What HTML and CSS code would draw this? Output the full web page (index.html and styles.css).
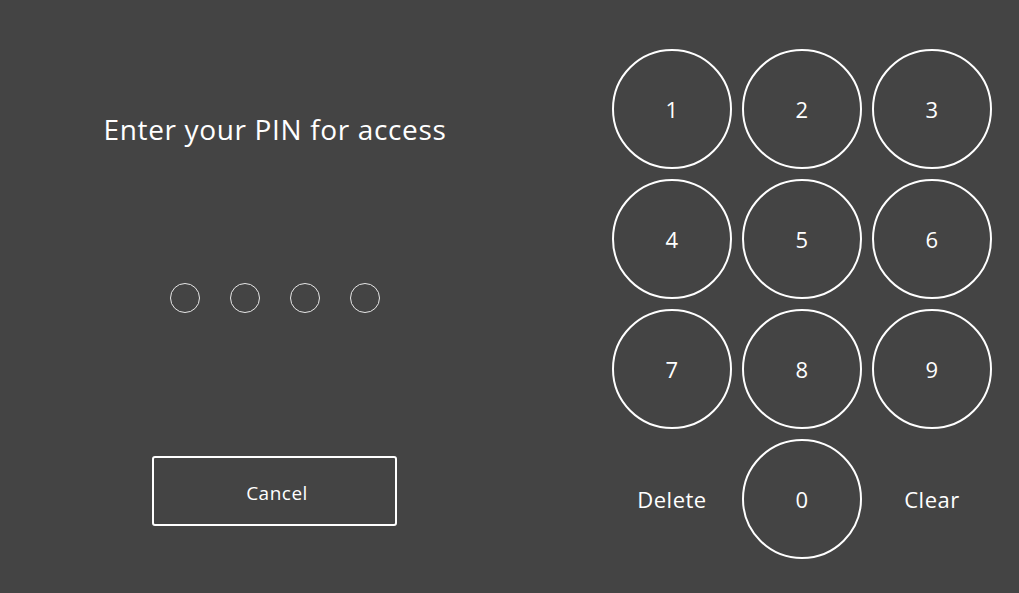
FILE: index.html
```html
<!DOCTYPE html>
<html>
<head>
<meta charset="utf-8">
<link rel="stylesheet" href="styles.css">
</head>
<body>
<div class="screen">
  <section class="left">
    <h1 class="title">Enter your PIN for access</h1>
    <div class="dots">
      <span class="dot"></span>
      <span class="dot"></span>
      <span class="dot"></span>
      <span class="dot"></span>
    </div>
    <button class="cancel">Cancel</button>
  </section>
  <section class="keypad">
    <button class="key">1</button>
    <button class="key">2</button>
    <button class="key">3</button>
    <button class="key">4</button>
    <button class="key">5</button>
    <button class="key">6</button>
    <button class="key">7</button>
    <button class="key">8</button>
    <button class="key">9</button>
    <button class="key text">Delete</button>
    <button class="key">0</button>
    <button class="key text">Clear</button>
  </section>
</div>
</body>
</html>
```
FILE: styles.css
```css
html, body {
  margin: 0;
  padding: 0;
  background: #444444;
  width: 1019px;
  height: 593px;
  overflow: hidden;
  font-family: "Open Sans", "Lato", sans-serif;
  color: #ffffff;
}
.screen {
  display: flex;
  height: 593px;
}
.left {
  width: 550px;
  display: flex;
  flex-direction: column;
  align-items: center;
}
.title {
  margin: 110px 0 0 0;
  font-size: 28px;
  line-height: 38px;
  font-weight: 400;
  letter-spacing: 0.65px;
}
.dots {
  display: flex;
  gap: 30px;
  margin-top: 135px;
  margin-left: -1px;
}
.dot {
  box-sizing: border-box;
  width: 30px;
  height: 30px;
  border: 1.5px solid #e6e6e6;
  border-radius: 50%;
}
.cancel {
  margin-top: 143px;
  width: 245px;
  height: 70px;
  background: transparent;
  border: 2px solid #ffffff;
  border-radius: 3px;
  color: #ffffff;
  font-family: inherit;
  font-size: 19px;
  letter-spacing: 0.5px;
  padding: 3px 0 0 6px;
  margin-left: -2px;
}
.keypad {
  margin-left: 62px;
  margin-top: 49px;
  display: grid;
  grid-template-columns: repeat(3, 120px);
  grid-auto-rows: 120px;
  gap: 10px;
  align-content: start;
}
.key {
  width: 120px;
  height: 120px;
  border: 2px solid #ffffff;
  border-radius: 50%;
  background: transparent;
  color: #ffffff;
  font-family: inherit;
  font-size: 22px;
  letter-spacing: 0.5px;
  padding: 0;
}
.key.text {
  border-color: transparent;
}
```
